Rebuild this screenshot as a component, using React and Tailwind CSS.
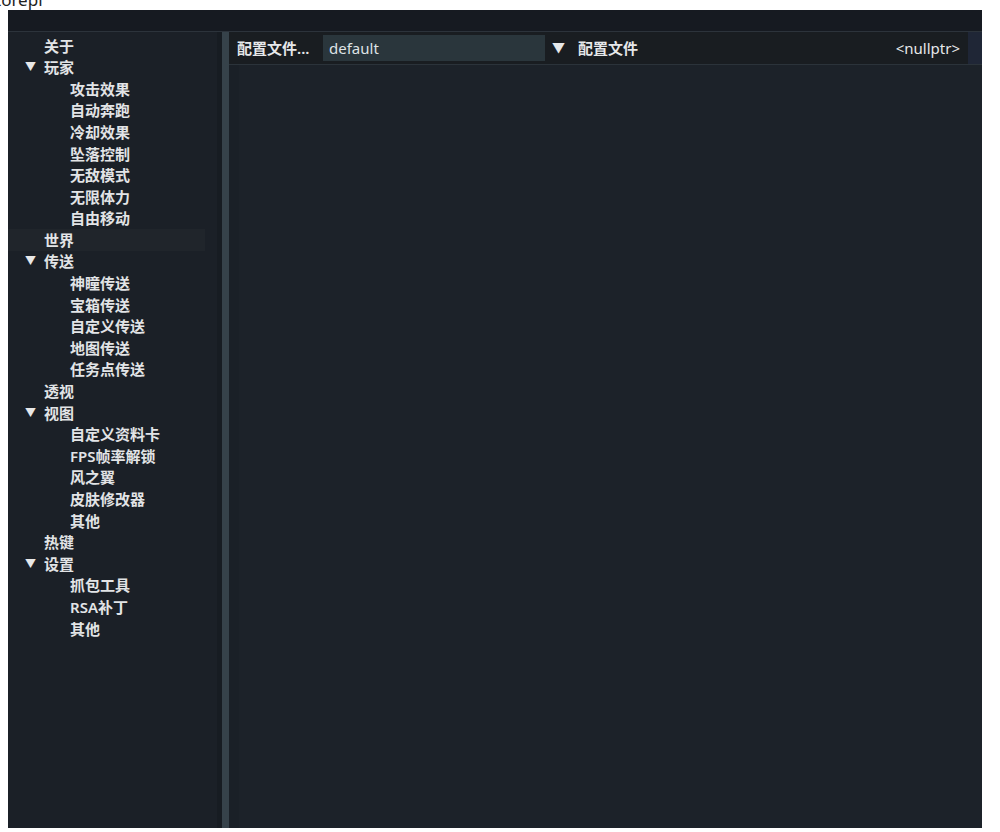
const tree = [
    { label: '关于', level: 0 },
    { label: '玩家', level: 0, open: true },
    { label: '攻击效果', level: 1 },
    { label: '自动奔跑', level: 1 },
    { label: '冷却效果', level: 1 },
    { label: '坠落控制', level: 1 },
    { label: '无敌模式', level: 1 },
    { label: '无限体力', level: 1 },
    { label: '自由移动', level: 1 },
    { label: '世界', level: 0, hover: true },
    { label: '传送', level: 0, open: true },
    { label: '神瞳传送', level: 1 },
    { label: '宝箱传送', level: 1 },
    { label: '自定义传送', level: 1 },
    { label: '地图传送', level: 1 },
    { label: '任务点传送', level: 1 },
    { label: '透视', level: 0 },
    { label: '视图', level: 0, open: true },
    { label: '自定义资料卡', level: 1 },
    { label: 'FPS帧率解锁', level: 1 },
    { label: '风之翼', level: 1 },
    { label: '皮肤修改器', level: 1 },
    { label: '其他', level: 1 },
    { label: '热键', level: 0 },
    { label: '设置', level: 0, open: true },
    { label: '抓包工具', level: 1 },
    { label: 'RSA补丁', level: 1 },
    { label: '其他', level: 1 },
];

function TreeRow({ item }) {
    return (
        <div
            className={
                'h-[21.6px] flex items-center text-[15px] font-semibold text-[#e2e4e6] ' +
                (item.hover ? 'bg-[#20252b] mr-[12px]' : '')
            }
        >
            {item.level === 0 ? (
                <>
                    <span className="w-[36px] pl-[17px] text-[11px] text-[#e8e8e8]">
                        {item.open ? '▼' : ''}
                    </span>
                    <span>{item.label}</span>
                </>
            ) : (
                <span className="pl-[62px]">{item.label}</span>
            )}
        </div>
    );
}

export default function App() {
    return (
        <div
            className="w-[1000px] h-[832px] bg-white overflow-hidden"
            style={{ fontFamily: '"Noto Sans", "Noto Sans CJK SC", sans-serif' }}
        >
            <div className="h-[10px] overflow-hidden">
                <div className="-mt-[10px] -ml-[5px] text-[17px] text-[#222] leading-[20px]">torepl</div>
            </div>

            <div className="ml-[8px] w-[974px] h-[818px] flex flex-col bg-[#1c2229]">
                <div className="h-[22px] shrink-0 bg-[#161a21] border-b border-[#2c333b]" />

                <div className="flex flex-1 min-h-0">
                    <div className="w-[209px] bg-[#1b2027] pt-[3px]">
                        {tree.map((item, i) => (
                            <TreeRow key={i} item={item} />
                        ))}
                    </div>
                    <div className="w-[5px] bg-[#171c22]" />
                    <div className="w-[7px] bg-[#36424a]" />

                    <div className="flex-1 flex flex-col">
                        <div className="h-[33px] bg-[#191d21] border-b border-[#2b333a] flex items-center text-[15px] font-semibold text-[#e6e8ea]">
                            <span className="pl-[8px] w-[94px] whitespace-nowrap">配置文件...</span>
                            <div className="w-[222px] h-[26px] bg-[#2a363c] flex items-center pl-[6px] font-normal text-[#dfe3e5]">
                                default
                            </div>
                            <span className="ml-[7px] text-[13px] w-[26px]">▼</span>
                            <span>配置文件</span>
                            <span className="ml-auto font-normal text-[#e6e8ea]">&lt;nullptr&gt;</span>
                            <div className="ml-[8px] w-[14px] h-full bg-[#1f2636]" />
                        </div>
                        <div className="flex-1 flex">
                            <div className="w-[10px] bg-[#1a2027]" />
                            <div className="flex-1 bg-[#1c2229]" />
                        </div>
                    </div>
                </div>
            </div>
        </div>
    );
}
